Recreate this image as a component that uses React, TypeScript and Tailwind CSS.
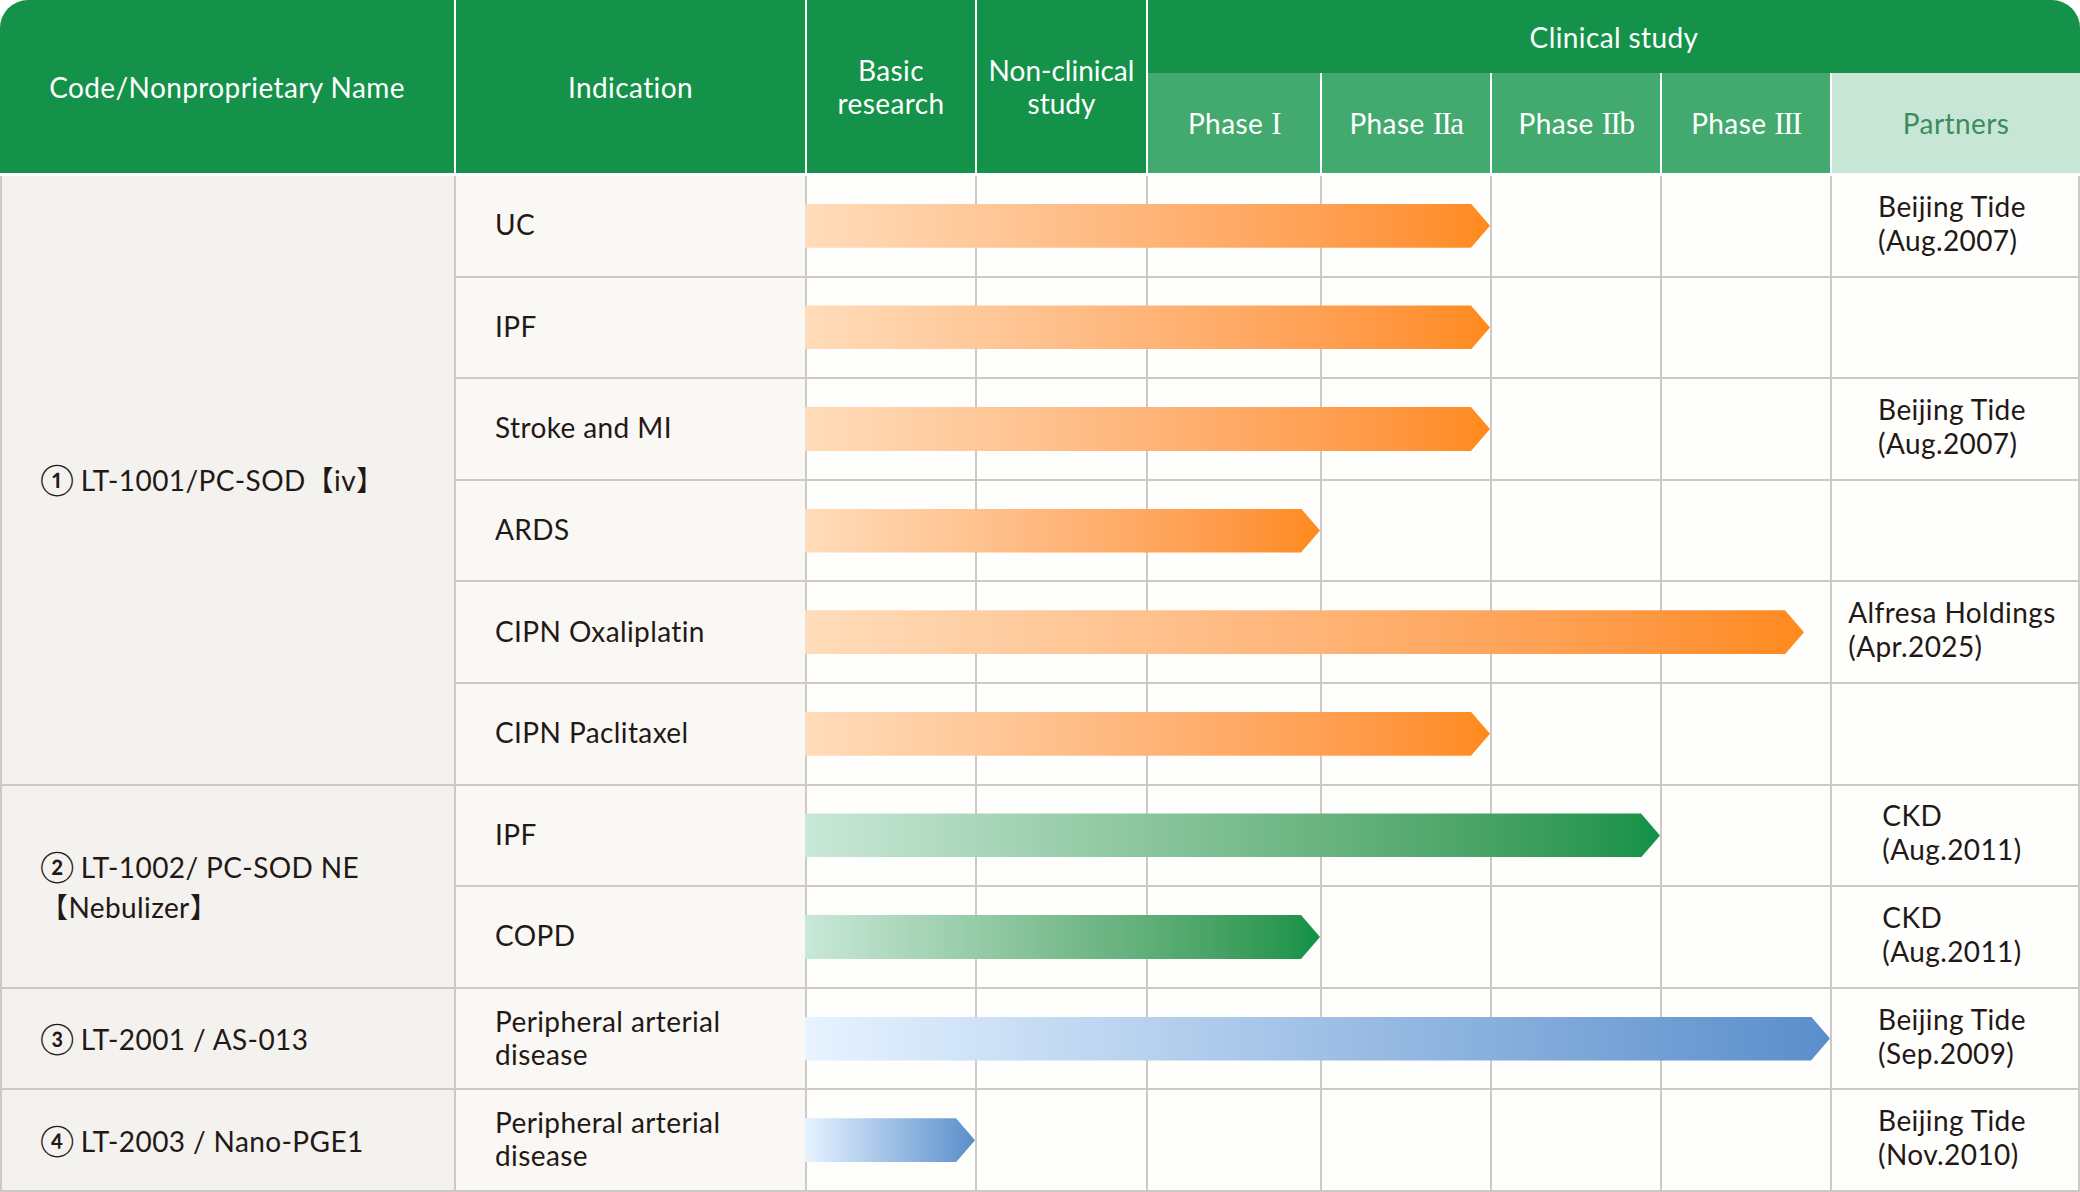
import React from "react";

type Tone = "orange" | "green" | "blue";

const TONE: Record<Tone, string> = {
  orange: "bg-linear-to-r from-[#ffdcba] to-[#ff8a1a]",
  green: "bg-linear-to-r from-[#c9e8d8] to-[#0f9147]",
  blue: "bg-linear-to-r from-[#e7f3ff] to-[#5a8ecb]",
};

const ROW_START = [
  "row-start-1", "row-start-2", "row-start-3", "row-start-4", "row-start-5",
  "row-start-6", "row-start-7", "row-start-8", "row-start-9", "row-start-10",
];
const BLANK_COLS = ["col-start-3", "col-start-4", "col-start-5", "col-start-6", "col-start-7", "col-start-8"];

type Row = { label: string[]; end: string; tone: Tone; partner?: string[] };

const ROWS: Row[] = [
  { label: ["UC"], end: "col-end-7", tone: "orange", partner: ["Beijing Tide", "(Aug.2007)"] },
  { label: ["IPF"], end: "col-end-7", tone: "orange" },
  { label: ["Stroke and MI"], end: "col-end-7", tone: "orange", partner: ["Beijing Tide", "(Aug.2007)"] },
  { label: ["ARDS"], end: "col-end-6", tone: "orange" },
  { label: ["CIPN Oxaliplatin"], end: "col-end-9 mr-[26px]", tone: "orange", partner: ["Alfresa Holdings", "(Apr.2025)"] },
  { label: ["CIPN Paclitaxel"], end: "col-end-7", tone: "orange" },
  { label: ["IPF"], end: "col-end-8", tone: "green", partner: ["CKD", "(Aug.2011)"] },
  { label: ["COPD"], end: "col-end-6", tone: "green", partner: ["CKD", "(Aug.2011)"] },
  { label: ["Peripheral arterial", "disease"], end: "col-end-9", tone: "blue", partner: ["Beijing Tide", "(Sep.2009)"] },
  { label: ["Peripheral arterial", "disease"], end: "col-end-4", tone: "blue", partner: ["Beijing Tide", "(Nov.2010)"] },
];

const DRUGS = [
  { place: "row-start-1 row-span-6", no: "①", lines: ["LT-1001/PC-SOD【iv】"] },
  { place: "row-start-7 row-span-2", no: "②", lines: ["LT-1002/ PC-SOD NE", "【Nebulizer】"] },
  { place: "row-start-9", no: "③", lines: ["LT-2001 / AS-013"] },
  { place: "row-start-10", no: "④", lines: ["LT-2003 / Nano-PGE1"] },
];

const PHASES = [
  { col: "col-start-5", num: "I" },
  { col: "col-start-6", num: "IIa" },
  { col: "col-start-7", num: "IIb" },
  { col: "col-start-8", num: "III" },
];

export default function App() {
  return (
    <div className="w-[2080px] h-[1192px] bg-white flex flex-col font-['Lato','Noto_Sans_CJK_JP',sans-serif] text-[28px] tracking-[0.4px] text-[#231815]">
      {/* Header */}
      <div className="grid grid-cols-[454px_349px_168px_169px_172px_168px_168px_168px_248px] grid-rows-[73px_100px] gap-x-[2px] bg-white text-white shrink-0">
        <div className="col-start-1 row-start-1 row-span-2 bg-[#14924a] rounded-tl-[28px] flex items-center justify-center">Code/Nonproprietary Name</div>
        <div className="col-start-2 row-start-1 row-span-2 bg-[#14924a] flex items-center justify-center">Indication</div>
        <div className="col-start-3 row-start-1 row-span-2 bg-[#14924a] flex items-center justify-center text-center leading-[33px]">Basic<br />research</div>
        <div className="col-start-4 row-start-1 row-span-2 bg-[#14924a] flex items-center justify-center text-center leading-[33px] tracking-normal">Non-clinical<br />study</div>
        <div className="col-start-5 col-span-5 row-start-1 bg-[#14924a] rounded-tr-[28px] flex items-center justify-center">Clinical study</div>
        {PHASES.map((p) => (
          <div key={p.num} className={`${p.col} row-start-2 bg-[#42aa6e] flex items-center justify-center gap-[8px]`}>
            <span>Phase</span>
            <span className="font-['Liberation_Serif',serif] text-[31px] tracking-[-1.5px] leading-none">{p.num}</span>
          </div>
        ))}
        <div className="col-start-9 row-start-2 bg-[#c8e6d6] text-[#3b8c5d] flex items-center justify-center">Partners</div>
      </div>

      {/* Body */}
      <div className="flex-1 flex flex-col pt-[3px] bg-white">
        <div className="flex-1 grid grid-cols-[452px_349px_168px_169px_172px_168px_168px_168px_246px] grid-rows-[repeat(10,1fr)] gap-[2px] bg-[#cfc8c4] border-x-2 border-b-2 border-[#cfc8c4]">
          {DRUGS.map((d) => (
            <div key={d.no} className={`${d.place} col-start-1 bg-[#f4f2ee] flex flex-col justify-center px-[38px] leading-[40px]`}>
              {d.lines.map((l, k) => (
                <span key={l}>
                  {k === 0 && <span className="text-[31px] mr-[6px]">{d.no}</span>}
                  {l}
                </span>
              ))}
            </div>
          ))}

          {ROWS.map((r, i) => (
            <React.Fragment key={i}>
              <div className={`${ROW_START[i]} col-start-2 bg-[#faf8f5] flex flex-col justify-center pl-[39px] pb-[2px] leading-[33px]`}>
                {r.label.map((l) => <span key={l}>{l}</span>)}
              </div>
              {BLANK_COLS.map((c) => (
                <div key={c} className={`${ROW_START[i]} ${c} bg-[#fefefd]`} />
              ))}
              <div className={`${ROW_START[i]} col-start-9 bg-[#fefefd] flex items-center justify-center pb-[6px] pr-[6px]`}>
                {r.partner && (
                  <div className="flex flex-col leading-[34px]">
                    {r.partner.map((l) => <span key={l}>{l}</span>)}
                  </div>
                )}
              </div>
              <div
                className={`${ROW_START[i]} col-start-3 ${r.end} -ml-[2px] self-center h-[44px] z-10 ${TONE[r.tone]} [clip-path:polygon(0_0,calc(100%_-_19px)_0,100%_50%,calc(100%_-_19px)_100%,0_100%)]`}
              />
            </React.Fragment>
          ))}
        </div>
      </div>
    </div>
  );
}
